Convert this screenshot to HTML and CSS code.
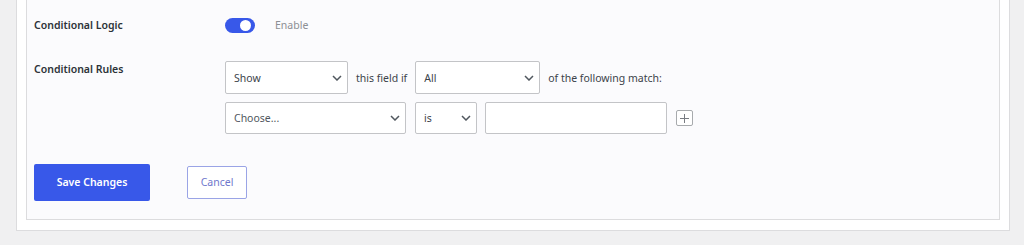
FILE: index.html
```html
<!doctype html>
<html>
<head>
<meta charset="UTF-8" />
<title>Conditional Logic</title>
<link rel="stylesheet" href="styles.css">
</head>
<body>
	<div id="wrapper">
		<div id="panel">
			<div class="field-row logic-row">
				<div class="field-label">Conditional Logic</div>
				<div class="field-value">
					<label class="toggle"><input type="checkbox" checked /><span class="slider"></span></label>
					<span class="toggle-text">Enable</span>
				</div>
			</div>
			<div class="field-row rules-row">
				<div class="field-label">Conditional Rules</div>
				<div class="field-value rules">
					<div class="rule-line">
						<span class="select-wrap w-show">
							<select><option>Show</option><option>Hide</option></select>
							<svg class="chevron" width="10" height="6" viewBox="0 0 10 6"><path d="M1 1l4 4 4-4" fill="none" stroke="#50575e" stroke-width="1.5"/></svg>
						</span>
						<span class="rule-text">this field if</span>
						<span class="select-wrap w-all">
							<select><option>All</option><option>Any</option></select>
							<svg class="chevron" width="10" height="6" viewBox="0 0 10 6"><path d="M1 1l4 4 4-4" fill="none" stroke="#50575e" stroke-width="1.5"/></svg>
						</span>
						<span class="rule-text">of the following match:</span>
					</div>
					<div class="rule-line">
						<span class="select-wrap w-choose">
							<select><option>Choose...</option></select>
							<svg class="chevron" width="10" height="6" viewBox="0 0 10 6"><path d="M1 1l4 4 4-4" fill="none" stroke="#50575e" stroke-width="1.5"/></svg>
						</span>
						<span class="select-wrap w-is">
							<select><option>is</option><option>is not</option></select>
							<svg class="chevron" width="10" height="6" viewBox="0 0 10 6"><path d="M1 1l4 4 4-4" fill="none" stroke="#50575e" stroke-width="1.5"/></svg>
						</span>
						<input type="text" class="rule-input" />
						<a href="#" class="add-rule"><svg width="9" height="9" viewBox="0 0 9 9"><path d="M4.5 0v9M0 4.5h9" stroke="#787c82" stroke-width="1"/></svg></a>
					</div>
				</div>
			</div>
			<div class="actions">
				<a href="#" id="save">Save Changes</a>
				<a href="#" id="cancel">Cancel</a>
			</div>
		</div>
	</div>
</body>
</html>
```

FILE: styles.css
```css
html, body, div, form, input, select, a, label, span{
	margin:0;
	padding:0;
	outline:0;
}
body{
	background-color:#f0f0f1;
	font: 10.5px "Noto Sans", "Open Sans", sans-serif;
	color:#3c434a;
}
#wrapper{
	margin:0 14px 15px 16px;
	padding:0 9px 10px 9px;
	background-color:#fff;
	border:1px solid #dcdcde;
	border-top:0;
}
#panel{
	padding:17px 7px 18px 7px;
	background-color:#fbfbfd;
	border:1px solid #dcdcde;
	border-top:0;
}
.field-row{
	display:flex;
}
.field-label{
	width:191px;
	flex-shrink:0;
	font-weight:600;
	color:#2c3338;
	line-height:16px;
}
.logic-row{
	align-items:center;
}
.rules-row{
	margin-top:28px;
}
.field-value{
	display:flex;
	align-items:center;
}
.toggle{
	position:relative;
	display:inline-block;
	width:30px;
	height:15px;
}
.toggle input{
	display:none;
}
.slider{
	position:absolute;
	inset:0;
	background-color:#3858e9;
	border-radius:8px;
}
.slider:after{
	content:"";
	position:absolute;
	top:2px;
	right:4px;
	width:11px;
	height:11px;
	background-color:#fff;
	border-radius:50%;
}
.toggle-text{
	margin-left:20px;
	color:#8c8f94;
}
.rules{
	flex-direction:column;
	align-items:flex-start;
	gap:8px;
}
.rule-line{
	display:flex;
	align-items:center;
	gap:8px;
}
.select-wrap{
	position:relative;
	display:inline-block;
}
.select-wrap select{
	appearance:none;
	-webkit-appearance:none;
	width:100%;
	height:33px;
	padding:0 24px 0 8px;
	font:inherit;
	color:#3c434a;
	background-color:#fff;
	border:1px solid #c3c4c7;
	border-radius:2px;
}
.chevron{
	position:absolute;
	right:6px;
	top:14px;
	pointer-events:none;
}
.w-show{ width:123px; }
.w-all{ width:125px; }
.w-choose{ width:181px; }
.w-is{ width:62px; margin-left:1px; }
.w-choose select, .w-is select{
	height:32px;
}
.w-choose .chevron, .w-is .chevron{
	top:13px;
}
.w-choose select{
	color:#50575e;
}
.rule-input{
	width:182px;
	height:32px;
	box-sizing:border-box;
	background-color:#fff;
	border:1px solid #c3c4c7;
	border-radius:2px;
}
.add-rule{
	display:flex;
	align-items:center;
	justify-content:center;
	width:17px;
	height:16px;
	box-sizing:border-box;
	margin-left:1px;
	border:1px solid #a7aaad;
	border-radius:2px;
	background-color:#fff;
}
.actions{
	display:flex;
	align-items:center;
	gap:37px;
	margin-top:30px;
}
#save{
	width:116px;
	height:37px;
	line-height:37px;
	text-align:center;
	text-decoration:none;
	font-weight:600;
	color:#fff;
	background-color:#3858e9;
	border-radius:2px;
}
#cancel{
	width:60px;
	height:33px;
	line-height:31px;
	box-sizing:border-box;
	text-align:center;
	text-decoration:none;
	color:#6f78cc;
	background-color:#fff;
	border:1px solid #9aa4e6;
	border-radius:2px;
}
```
